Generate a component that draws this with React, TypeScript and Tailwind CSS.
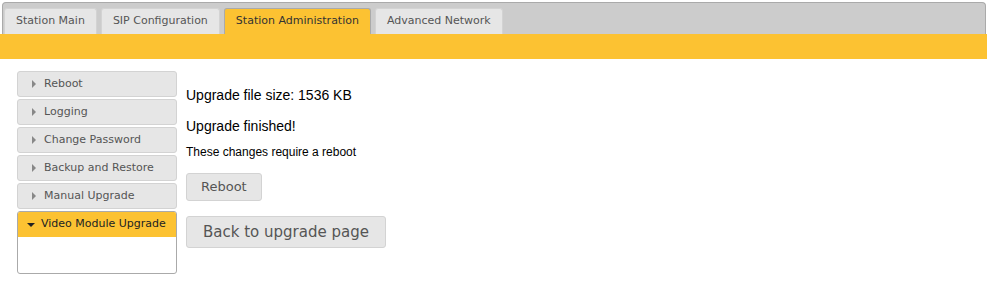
const tabs = ['Station Main', 'SIP Configuration', 'Station Administration', 'Advanced Network'];
const active = 'Station Administration';

const menu = ['Reboot', 'Logging', 'Change Password', 'Backup and Restore', 'Manual Upgrade'];

function Caret({ open }: { open?: boolean }) {
  return open ? (
    <svg width="8" height="8" viewBox="0 0 8 8" className="shrink-0">
      <path d="M0 2h8L4 6z" fill="#222" />
    </svg>
  ) : (
    <svg width="8" height="8" viewBox="0 0 8 8" className="shrink-0">
      <path d="M2 0v8l4-4z" fill="#888" />
    </svg>
  );
}

export default function App() {
  return (
    <div className="h-[281px] w-[987px] overflow-hidden bg-white font-['Verdana','DejaVu_Sans',sans-serif]">
      <div className="ml-[2px] mr-[1px] mt-[2px] flex h-[32px] items-end gap-[4px] rounded-t-[4px] border border-b-0 border-[#aaa] bg-[#ccc] pl-[1px]">
        {tabs.map((t) => (
          <div
            key={t}
            className={
              t === active
                ? 'flex h-[26px] items-center rounded-t-[3px] border border-b-0 border-[#aaa] bg-[#fcc232] px-[11px] text-[11px] text-[#333]'
                : 'flex h-[26px] items-center rounded-t-[3px] border border-b-0 border-[#d3d3d3] bg-[#e6e6e6] px-[11px] text-[11px] text-[#555]'
            }
          >
            {t}
          </div>
        ))}
      </div>
      <div className="h-[25px] bg-[#fcc232]" />

      <div className="flex gap-[9px] pl-[17px] pt-[12px]">
        <div className="flex w-[160px] flex-col gap-[2px]">
          {menu.map((m) => (
            <div
              key={m}
              className="flex h-[26px] items-center gap-[6px] rounded-[3px] border border-[#d3d3d3] bg-[#e6e6e6] pl-[12px] text-[11px] text-[#555]"
            >
              <Caret />
              {m}
            </div>
          ))}
          <div className="h-[63px] overflow-hidden rounded-[3px] border border-[#aaa]">
            <div className="flex h-[25px] items-center gap-[6px] bg-[#fcc232] pl-[9px] text-[11px] text-[#222]">
              <Caret open />
              Video Module Upgrade
            </div>
          </div>
        </div>

        <div className="flex flex-col items-start pt-[14px] font-['Liberation_Sans',Arial,sans-serif] text-black">
          <p className="h-[20px] text-[14px] leading-[20px]">Upgrade file size: 1536 KB</p>
          <p className="mt-[11px] h-[20px] text-[14px] leading-[20px]">Upgrade finished!</p>
          <p className="mt-[8px] h-[16px] text-[12px] leading-[16px]">These changes require a reboot</p>
          <button className="mt-[13px] h-[28px] rounded-[3px] border border-[#d3d3d3] bg-[#e6e6e6] px-[14px] font-['Verdana','DejaVu_Sans',sans-serif] text-[13px] text-[#555]">
            Reboot
          </button>
          <button className="mt-[15px] h-[32px] rounded-[3px] border border-[#d3d3d3] bg-[#e6e6e6] px-[16px] font-['Verdana','DejaVu_Sans',sans-serif] text-[15px] text-[#555]">
            Back to upgrade page
          </button>
        </div>
      </div>
    </div>
  );
}
